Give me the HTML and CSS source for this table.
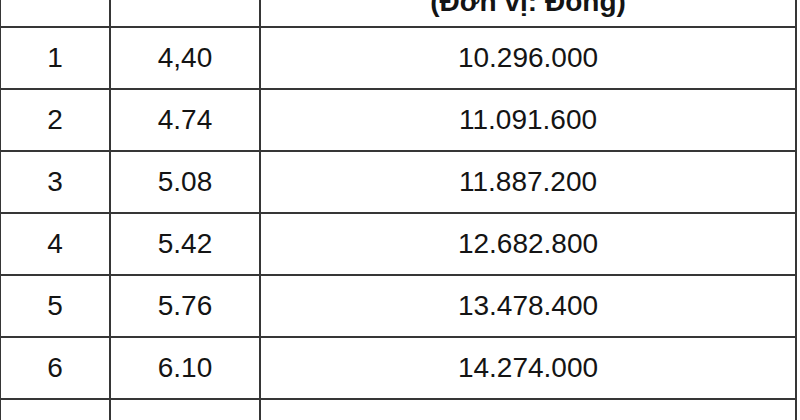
FILE: index.html
```html
<!DOCTYPE html>
<html lang="vi">
<head>
<meta charset="utf-8">
<title>Bảng lương</title>
<link rel="stylesheet" href="styles.css">
</head>
<body>
<div class="frame">
<table class="salary">
  <thead>
    <tr>
      <th class="c1">Bậc</th>
      <th class="c2">Hệ số</th>
      <th class="c3">Mức lương<br>(Đơn vị: Đồng)</th>
    </tr>
  </thead>
  <tbody>
    <tr><td>1</td><td>4,40</td><td>10.296.000</td></tr>
    <tr><td>2</td><td>4.74</td><td>11.091.600</td></tr>
    <tr><td>3</td><td>5.08</td><td>11.887.200</td></tr>
    <tr><td>4</td><td>5.42</td><td>12.682.800</td></tr>
    <tr><td>5</td><td>5.76</td><td>13.478.400</td></tr>
    <tr><td>6</td><td>6.10</td><td>14.274.000</td></tr>
    <tr><td>7</td><td>6.44</td><td>15.069.600</td></tr>
  </tbody>
</table>
</div>
</body>
</html>
```
FILE: styles.css
```css
html, body {
  margin: 0;
  padding: 0;
  background: #ffffff;
}
body {
  width: 800px;
  height: 420px;
  overflow: hidden;
}
.frame {
  margin-top: -52px;
  margin-left: -1px;
}
.salary {
  border-collapse: collapse;
  width: 798px;
  font-family: "Liberation Sans", Arial, Helvetica, sans-serif;
  font-size: 28px;
  color: #141414;
}
.salary th,
.salary td {
  border: 2px solid #363636;
  padding: 0;
  text-align: center;
  vertical-align: middle;
}
.salary th {
  font-weight: bold;
  line-height: 32px;
  height: 68px;
  padding-bottom: 8px;
  vertical-align: bottom;
}
.salary th.c1,
.salary th.c2 {
  vertical-align: top;
  padding: 0;
}
.salary td {
  height: 60px;
  line-height: 30px;
}
.c1 { width: 108px; }
.c2 { width: 148px; }
```
